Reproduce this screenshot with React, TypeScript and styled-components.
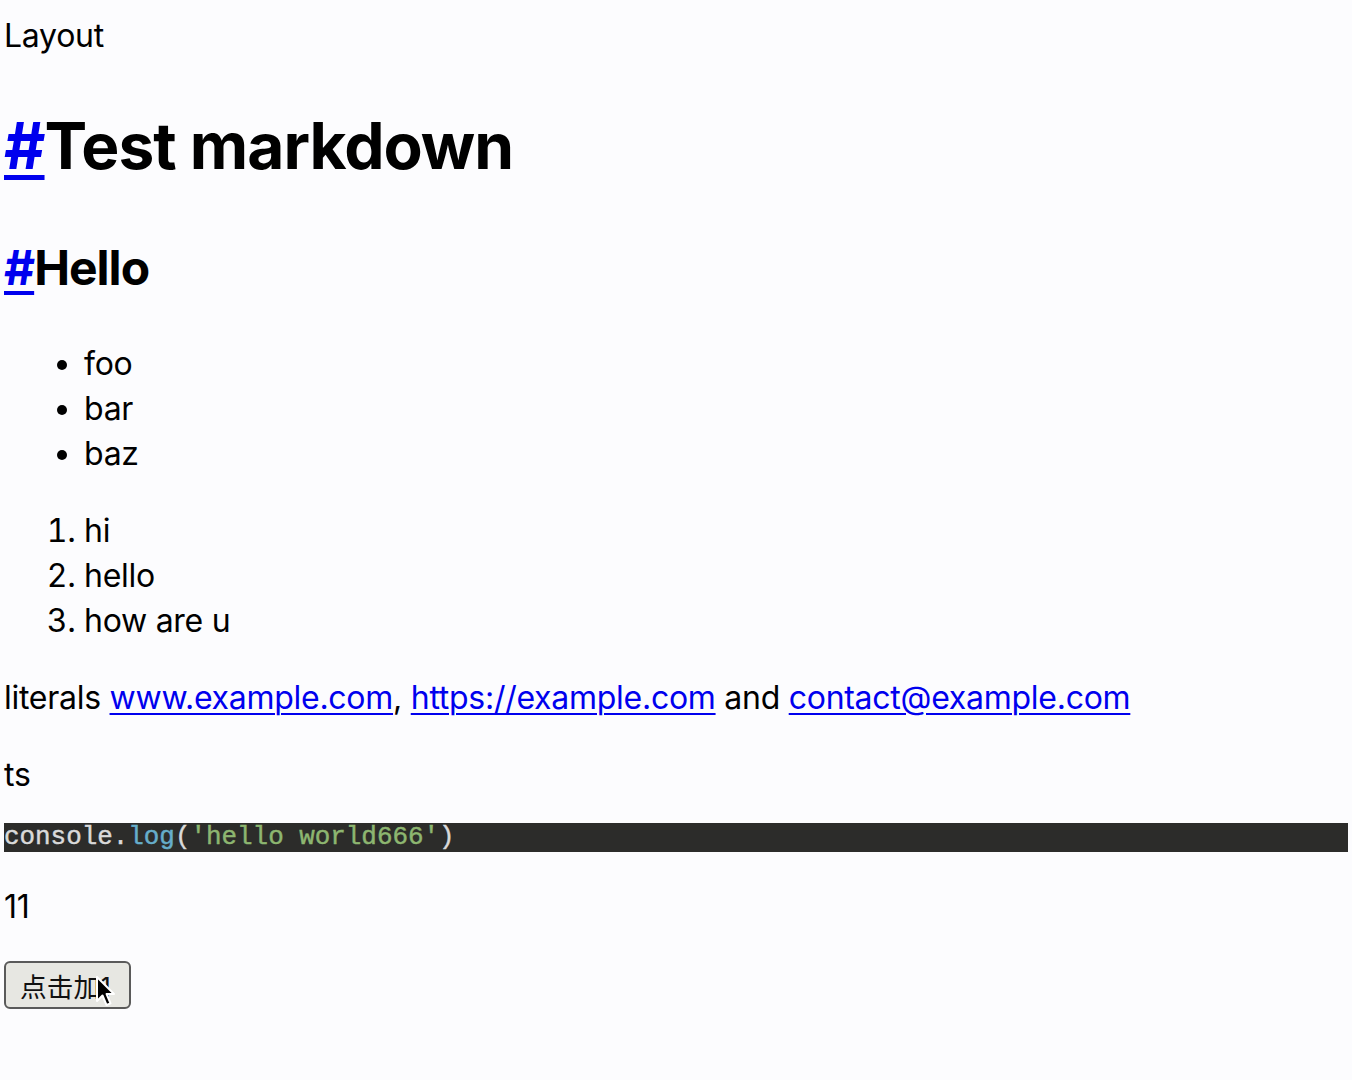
import React from "react";
import styled, { createGlobalStyle } from "styled-components";

const GlobalStyle = createGlobalStyle`
  html, body {
    margin: 0;
    padding: 0;
    background: #fcfcfe;
  }
  body {
    font-family: Inter, "Liberation Sans", Arial, sans-serif;
    font-size: 32px;
    line-height: 45px;
    letter-spacing: -0.27px;
    color: #000;
  }
`;

const Page = styled.div`
  padding: 13px 4px 40px 4px;
`;

const LayoutTitle = styled.div`
  font-size: 32px;
  line-height: 45px;
`;

const H1 = styled.h1`
  font-size: 64px;
  font-weight: 700;
  line-height: 90px;
  letter-spacing: -1px;
  margin: 42.88px 0;
`;

const H2 = styled.h2`
  font-size: 48px;
  font-weight: 700;
  line-height: 67px;
  letter-spacing: -1px;
  margin: 39.84px 0;
`;

const Anchor = styled.a<{ $thick?: number }>`
  color: #0000ee;
  text-decoration: underline;
  text-decoration-thickness: ${(p) => p.$thick ?? 3}px;
  text-underline-offset: 6px;
`;

const List = styled.ul`
  margin: 32px 0;
  padding-left: 80px;
  line-height: 45px;
`;

const OList = styled.ol`
  margin: 32px 0;
  padding-left: 80px;
  line-height: 45px;
`;

const Para = styled.p`
  margin: 32px 0;
  line-height: 45px;
`;

const Link = styled.a`
  color: #0000ee;
  text-decoration: underline;
  text-decoration-thickness: 2px;
  text-underline-offset: 4px;
`;

const CodeLang = styled.div`
  margin: 0;
  line-height: 45px;
`;

const Pre = styled.pre`
  margin: 26.67px 0;
  padding: 0;
  height: 29px;
  background: #2c2c2a;
  font-family: "Liberation Mono", "Courier New", Courier, monospace;
  font-size: 25.9px;
  line-height: 29px;
  letter-spacing: 0;
  overflow: hidden;
`;

const Code = styled.code`
  display: block;
  font-family: inherit;
  font-size: inherit;
  line-height: inherit;
  -webkit-text-stroke: 0.45px currentColor;
`;

const Token = styled.span<{ $kind: "plain" | "fn" | "str" }>`
  color: ${(p) =>
    p.$kind === "fn" ? "#66aecb" : p.$kind === "str" ? "#8db670" : "#dadada"};
`;

const ButtonRow = styled.div`
  margin: 32px 0 0 0;
  position: relative;
  width: max-content;
`;

const CountButton = styled.button`
  display: block;
  font-family: Inter, "Noto Sans CJK SC", sans-serif;
  font-size: 26.67px;
  letter-spacing: 0;
  height: 48px;
  width: 127px;
  padding: 0 4px 0 0;
  border: 2px solid #5a5a5a;
  border-radius: 6px;
  background: #e7e7e2;
  color: #111;
  text-align: center;
  cursor: pointer;
`;

const Cursor = styled.svg`
  position: absolute;
  left: 91px;
  top: 14px;
  width: 22px;
  height: 34px;
  pointer-events: none;
`;

export default function App() {
  return (
    <>
      <GlobalStyle />
      <Page>
        <LayoutTitle>Layout</LayoutTitle>
        <H1>
          <Anchor href="#test-markdown" $thick={5}>#</Anchor>Test markdown
        </H1>
        <H2>
          <Anchor href="#hello" $thick={4}>#</Anchor>Hello
        </H2>
        <List>
          <li>foo</li>
          <li>bar</li>
          <li>baz</li>
        </List>
        <OList>
          <li>hi</li>
          <li>hello</li>
          <li>how are u</li>
        </OList>
        <Para>
          literals <Link href="#">www.example.com</Link>,{" "}
          <Link href="#">https://example.com</Link> and{" "}
          <Link href="#">contact@example.com</Link>
        </Para>
        <CodeLang>ts</CodeLang>
        <Pre>
          <Code>
            <Token $kind="plain">console.</Token>
            <Token $kind="fn">log</Token>
            <Token $kind="plain">(</Token>
            <Token $kind="str">'hello world666'</Token>
            <Token $kind="plain">)</Token>
          </Code>
        </Pre>
        <Para>11</Para>
        <ButtonRow>
          <CountButton type="button">点击加1</CountButton>
          <Cursor viewBox="0 0 22 34">
            <path
              d="M2 2 L2 26 L7.5 20.5 L11.5 30 L15.5 28.3 L11.6 19 L19 19 Z"
              fill="#000"
              stroke="#fff"
              strokeWidth="2"
              strokeLinejoin="round"
            />
          </Cursor>
        </ButtonRow>
      </Page>
    </>
  );
}
